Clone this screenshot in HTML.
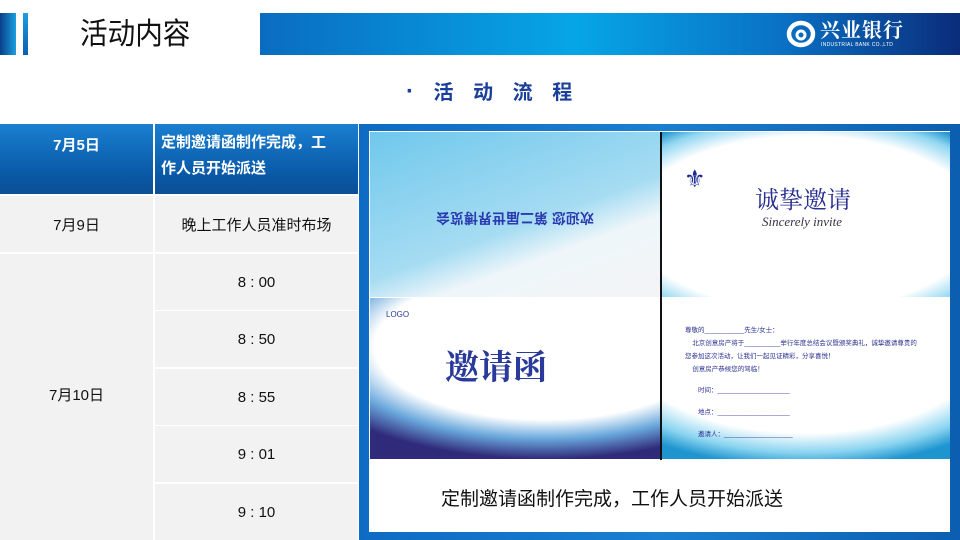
<!DOCTYPE html>
<html><head><meta charset="utf-8"><style>
*{margin:0;padding:0;box-sizing:border-box}
body{width:960px;height:540px;position:relative;overflow:hidden;background:#fff;font-family:"Liberation Sans","Noto Sans CJK SC",sans-serif}
.a{position:absolute}
.cell{position:absolute;display:flex;align-items:center;justify-content:center;background:#f2f2f2;color:#111;font-size:15px}
.hd{background:linear-gradient(#1a7fd0,#0a5aa8 70%,#0b4f94);color:#fff;font-weight:bold}
</style></head><body>
<div class="a" style="left:0;top:13px;width:16px;height:42px;background:linear-gradient(90deg,#0a3f8a,#1a9fe0)"></div>
<div class="a" style="left:23px;top:13px;width:5px;height:42px;background:linear-gradient(#1e9de2,#0c5fb0)"></div>
<div class="a" style="left:80px;top:14px;font-size:30px;color:#111;line-height:42px;transform:scaleX(.92);transform-origin:left">活动内容</div>
<div class="a" style="left:260px;top:13px;width:700px;height:42px;background:linear-gradient(90deg,#0a6cc0 0%,#06a6e6 45%,#0a70c4 75%,#0a2c7a 100%)"></div>
<svg class="a" style="left:786px;top:20px" width="30" height="28" viewBox="0 0 30 28"><ellipse cx="15" cy="14" rx="12" ry="11" fill="none" stroke="#fff" stroke-width="4.5"/><circle cx="15" cy="15" r="4" fill="none" stroke="#fff" stroke-width="3"/></svg>
<div class="a" style="left:820px;top:17px;color:#fff;font-family:'Noto Serif CJK SC',serif;font-size:20px;font-weight:bold;letter-spacing:1px;line-height:24px">兴业银行</div>
<div class="a" style="left:821px;top:42px;color:#fff;font-size:5px;letter-spacing:.3px">INDUSTRIAL BANK CO.,LTD</div>
<div class="a" style="left:406px;top:77px;font-size:20px;font-weight:bold;color:#1a3f9a;letter-spacing:7px;line-height:30px"><span style="font-size:24px">·</span> 活 动 流 程</div>

<div class="cell hd" style="left:0;top:124px;width:153px;height:70px;align-items:flex-start;padding-top:10px">7月5日</div>
<div class="cell hd" style="left:155px;top:124px;width:203px;height:70px;justify-content:flex-start;padding:6px 0 0 6px;line-height:26px;align-items:flex-start">定制邀请函制作完成，工<br>作人员开始派送</div>
<div class="cell" style="left:0;top:196px;width:153px;height:56px">7月9日</div>
<div class="cell" style="left:155px;top:196px;width:203px;height:56px">晚上工作人员准时布场</div>
<div class="cell" style="left:0;top:254px;width:153px;height:286px;padding-bottom:6px">7月10日</div>
<div class="cell" style="left:155px;top:254px;width:203px;height:56px">8 : 00</div>
<div class="cell" style="left:155px;top:311px;width:203px;height:56px">8 : 50</div>
<div class="cell" style="left:155px;top:369px;width:203px;height:56px">8 : 55</div>
<div class="cell" style="left:155px;top:426px;width:203px;height:56px">9 : 01</div>
<div class="cell" style="left:155px;top:484px;width:203px;height:56px">9 : 10</div>

<div class="a" style="left:359px;top:124px;width:601px;height:416px;background:linear-gradient(90deg,#0d6bc4,#1a7fd0 50%,#0b5eb0)"></div>
<div class="a" style="left:369px;top:131px;width:581px;height:401px;background:#fff"></div>
<div class="a" style="left:370px;top:132px;width:290px;height:165px;background:linear-gradient(160deg,#6fc8ec 0%,#a6dcf2 55%,#eef6fa 70%,#f4f4f6 100%)"></div>
<div class="a" style="left:436px;top:208px;font-size:14px;font-weight:bold;color:#2a3ab0;transform:rotate(180deg)">欢迎您 第二届世界博览会</div>
<div class="a" style="left:661px;top:132px;width:289px;height:165px;background:radial-gradient(ellipse 80% 70% at 50% 55%,#fff 75%,#8fd6f1 90%,#1b8fcc 100%)"></div>
<div class="a" style="left:755px;top:180px;font-family:'Noto Serif CJK SC',serif;font-size:24px;color:#2a3090">诚挚邀请</div>
<div class="a" style="left:762px;top:214px;font-family:'Liberation Serif',serif;font-style:italic;font-size:13px;color:#334">Sincerely invite</div>
<div class="a" style="left:684px;top:165px;font-size:24px;color:#1a2a90">⚜</div>
<div class="a" style="left:370px;top:298px;width:290px;height:161px;background:radial-gradient(ellipse 90% 70% at 60% 30%,#fff 65%,#6aa8dc 82%,#302a7a 100%)"></div>
<div class="a" style="left:445px;top:340px;font-family:'Noto Serif CJK SC',serif;font-size:34px;font-weight:bold;color:#2a3a9a">邀请函</div>
<div class="a" style="left:386px;top:310px;font-size:8px;color:#2a3a9a">LOGO</div>
<div class="a" style="left:661px;top:298px;width:289px;height:161px;background:radial-gradient(ellipse 85% 75% at 50% 30%,#fff 72%,#8ad4f0 88%,#1f95d0 100%)"></div>
<div class="a" style="left:685px;top:324px;font-size:6.5px;color:#2a3090;line-height:13px">尊敬的___________先生/女士：<br>&nbsp;&nbsp;&nbsp;&nbsp;北京创意房产将于__________举行年度总结会议暨颁奖典礼，诚挚邀请尊贵的<br>您参加这次活动，让我们一起见证精彩，分享喜悦！<br>&nbsp;&nbsp;&nbsp;&nbsp;创意房产恭候您的驾临！</div>
<div class="a" style="left:698px;top:380px;font-size:6.5px;color:#2a3090;line-height:22px">时间：____________________<br>地点：____________________<br>邀请人：___________________</div>
<div class="a" style="left:660px;top:132px;width:2px;height:328px;background:#111"></div>
<div class="a" style="left:441px;top:484px;font-size:19px;color:#111">定制邀请函制作完成，工作人员开始派送</div>
</body></html>
